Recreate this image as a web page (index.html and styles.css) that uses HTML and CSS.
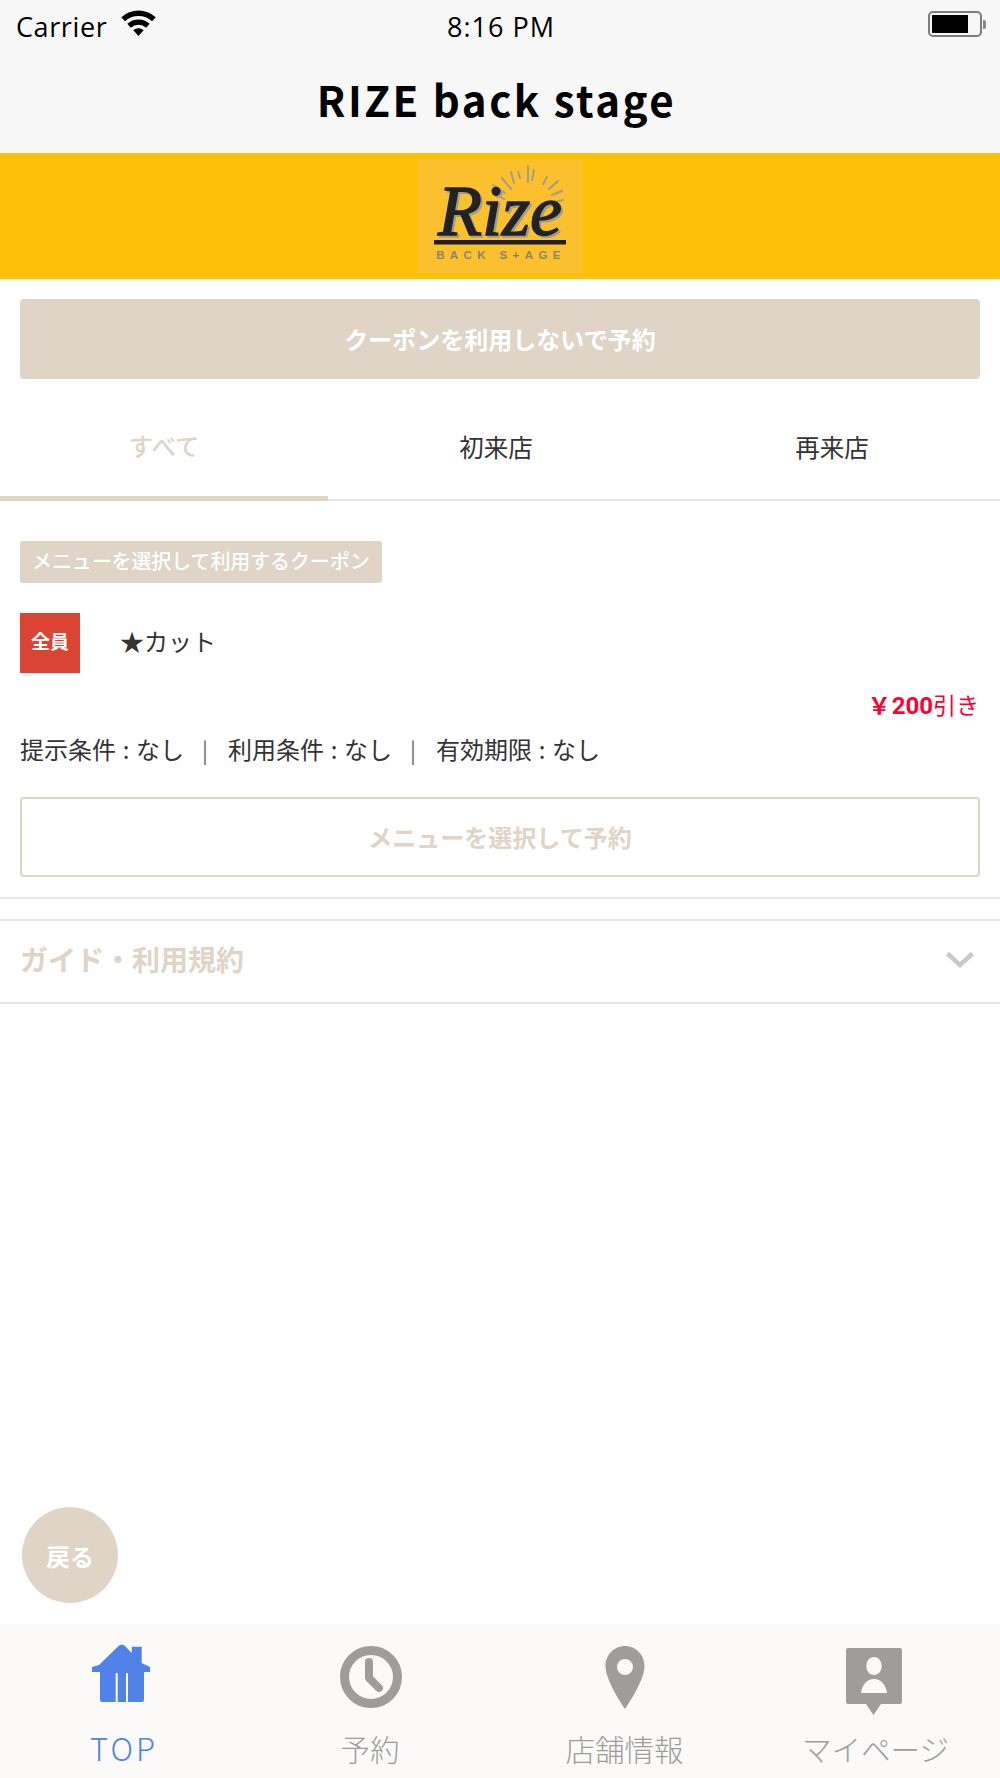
FILE: index.html
```html
<!DOCTYPE html>
<html lang="ja">

<head>
  <meta charset="UTF-8">
  <title>RIZE back stage</title>
  <link rel="stylesheet" href="styles.css">
</head>

<body>
  <div class="app">
    <header class="top">
      <div class="status">
        <div class="status-left">
          <span>Carrier</span>
          <svg class="wifi" viewBox="2 0 34 26">
            <path d="M19 25 14 19.500a7.500 7.500 0 0 1 10 0z" />
            <path d="M11.600 17 8.200 13.300a16 16 0 0 1 21.600 0L26.400 17a11 11 0 0 0-14.800 0z" />
            <path d="M5.900 10.800 2.400 7a24.500 24.500 0 0 1 33.200 0l-3.500 3.800a19.400 19.400 0 0 0-26.200 0z" />
          </svg>
        </div>
        <div class="status-time">8:16 PM</div>
        <div class="status-right">
          <div class="battery"><div class="battery-level"></div></div>
          <div class="battery-tip"></div>
        </div>
      </div>
      <h1 class="title">RIZE back stage</h1>
    </header>

    <div class="banner">
      <svg class="logo" viewBox="0 0 165 114">
        <rect width="165" height="114" fill="#fbc02d" />
        <g stroke="#a39c88" stroke-width="2" stroke-linecap="round">
          <path d="M110 7V23" />
          <path d="M116 11 114 21" />
          <path d="M100 13 102 19" />
          <path d="M93 13 96 24" />
          <path d="M84 19 93 30" />
          <path d="M75 26 87 34" />
          <path d="M78 35 86 40" />
          <path d="M75 45H81" />
          <path d="M129 18 125 25" />
          <path d="M140 22 131 30" />
          <path d="M144 32 134 36" />
          <path d="M145 41 136 43" />
        </g>
        <text class="logo-word" x="82" y="76" text-anchor="middle">Rize</text>
        <rect x="16" y="81" width="132" height="4.500" fill="#1f1f1f" />
        <text class="logo-sub" x="83" y="100" text-anchor="middle">BACK S+AGE</text>
      </svg>
    </div>

    <main class="content">
      <div class="plain-wrap">
        <a class="btn btn-solid">クーポンを利用しないで予約</a>
      </div>

      <nav class="tabs">
        <a class="tab tab-active">すべて</a>
        <a class="tab">初来店</a>
        <a class="tab">再来店</a>
      </nav>

      <section class="coupon">
        <div class="chip-row"><span class="chip">メニューを選択して利用するクーポン</span></div>
        <div class="coupon-head">
          <span class="badge">全員</span>
          <span class="coupon-name">★カット</span>
        </div>
        <div class="price"><span class="yen">￥</span><b>200</b>引き</div>
        <div class="terms">
          <span>提示条件 : なし</span><i>|</i>
          <span>利用条件 : なし</span><i>|</i>
          <span>有効期限 : なし</span>
        </div>
        <a class="btn btn-outline">メニューを選択して予約</a>
      </section>

      <div class="guide">
        <span class="guide-label">ガイド・利用規約</span>
        <svg class="chevron" viewBox="0 0 30 20">
          <path d="M2.500 3.500 15 15 27.500 3.500" />
        </svg>
      </div>

      <div class="back-wrap">
        <a class="back">戻る</a>
      </div>
    </main>

    <footer class="tabbar">
      <a class="tabbar-item tabbar-active">
        <svg class="tabbar-icon" viewBox="0 0 72 78">
          <path d="M7 27 14 25 33.500 6Q36.700 3 40 6L46.700 13V6.700H56.700V23L65 27V32H59V60Q59 62 57 62H17Q15 62 15 60V32H7z" />
          <path class="door" d="M31.700 33V62M42 33V62" />
        </svg>
        <span>TOP</span>
      </a>
      <a class="tabbar-item">
        <svg class="tabbar-icon" viewBox="0 0 72 78">
          <circle cx="37" cy="37" r="26.500" class="clock-face" />
          <path class="clock-hand" d="M35 22V38L45 48" />
        </svg>
        <span>予約</span>
      </a>
      <a class="tabbar-item">
        <svg class="tabbar-icon" viewBox="0 0 72 78">
          <path fill-rule="evenodd" d="M36 6C25 6 16.500 15 16.500 26 16.500 38 28 57 36 69 44 57 55.500 38 55.500 26 55.500 15 47 6 36 6zM36 19a8 8 0 1 1 0 16 8 8 0 0 1 0-16z" />
        </svg>
        <span>店舗情報</span>
      </a>
      <a class="tabbar-item">
        <svg class="tabbar-icon" viewBox="0 0 72 78">
          <path fill-rule="evenodd" d="M8 8H60Q62 8 62 10V62Q62 64 60 64H41L33.500 75 26 64H8Q6 64 6 62V10Q6 8 8 8zM34 17C29.500 17 26.300 21 26.300 26 26.300 31 29.500 35 34 35 38.500 35 41.700 31 41.700 26 41.700 21 38.500 17 34 17zM34 39C27 39 22 45 21 53H47C46 45 41 39 34 39z" />
        </svg>
        <span>マイページ</span>
      </a>
    </footer>
  </div>
</body>

</html>
```

FILE: styles.css
```css
html,
body {
  margin: 0;
  padding: 0;
  background: #fff;
}

a {
  display: block;
  text-decoration: none;
}

.app {
  width: 1000px;
  height: 1778px;
  display: flex;
  flex-direction: column;
  overflow: hidden;
  font-family: "Noto Sans CJK JP", "Noto Sans", sans-serif;
  color: #333;
}

/* status bar + nav */
.top {
  height: 153px;
  background: #f7f7f7;
  color: #000;
}

.status {
  height: 52px;
  padding: 0 14px 0 16px;
  display: flex;
  align-items: center;
  justify-content: space-between;
  font-family: "Open Sans", "Noto Sans", sans-serif;
  font-size: 27px;
  letter-spacing: 0.6px;
}

.status-left {
  width: 300px;
  display: flex;
  align-items: center;
  gap: 13px;
}

.wifi {
  width: 37px;
  height: 27px;
  margin-top: -5px;
}

.status-time {
  letter-spacing: 1px;
}

.status-right {
  width: 300px;
  display: flex;
  align-items: center;
  justify-content: flex-end;
  margin-top: -4px;
}

.battery {
  width: 54px;
  height: 26px;
  box-sizing: border-box;
  border: 2px solid #7d7d7d;
  border-radius: 5px;
  padding: 2px;
}

.battery-level {
  width: 36px;
  height: 18px;
  background: #000;
}

.battery-tip {
  width: 3px;
  height: 9px;
  margin-left: 1px;
  background: #8a8a8a;
  border-radius: 0 2px 2px 0;
}

.title {
  margin: 0;
  padding: 23px 7px 0 0;
  font-size: 42px;
  line-height: 48px;
  font-weight: 700;
  letter-spacing: 2.500px;
  text-align: center;
}

.banner {
  height: 126px;
  background: #ffc107;
  display: flex;
  justify-content: center;
  padding-top: 6px;
  box-sizing: border-box;
}

.logo {
  width: 165px;
  height: 114px;
}

.logo-word {
  font-family: "Liberation Serif", serif;
  font-style: italic;
  font-size: 72px;
  fill: #222;
  stroke: #222;
  stroke-width: 1.500px;
  filter: drop-shadow(2px 2px 0 #a39c88);
}

.logo-sub {
  font-family: "Liberation Sans", sans-serif;
  font-weight: 700;
  font-size: 11.500px;
  letter-spacing: 5.400px;
  fill: #8a8474;
}

/* main */
.content {
  flex: 1;
  display: flex;
  flex-direction: column;
}

.plain-wrap {
  padding: 20px 20px 0;
}

.btn {
  height: 80px;
  box-sizing: border-box;
  border-radius: 4px;
  padding-bottom: 2px;
  font-size: 24px;
  font-weight: 700;
  display: flex;
  align-items: center;
  justify-content: center;
}

.btn-solid {
  background: #e0d4c6;
  color: #fff;
}

.btn-outline {
  border: 2px solid #e0d4c6;
  background: #fff;
  color: #e0d4c6;
}

.tabs {
  display: flex;
  height: 122px;
  box-sizing: border-box;
  border-bottom: 2px solid #e6e6e6;
}

.tab {
  flex: 1;
  padding-top: 14px;
  display: flex;
  align-items: center;
  justify-content: center;
  font-size: 24.500px;
  font-weight: 400;
  color: #333;
}

.tab:first-child {
  flex: 0 0 328px;
}

.tab-active {
  margin-bottom: -2px;
  padding-top: 11px;
  box-shadow: inset 0 -5px 0 #e0d4c6;
  color: #e0d4c6;
  font-weight: 500;
}

.coupon {
  padding: 40px 20px 20px;
  border-bottom: 2px solid #e6e6e6;
}

.chip-row {
  display: flex;
}

.chip {
  width: 362px;
  height: 42px;
  box-sizing: border-box;
  padding-left: 12px;
  border-radius: 3px;
  background: #e0d4c6;
  color: #fff;
  font-size: 19.900px;
  font-weight: 500;
  line-height: 40px;
}

.coupon-head {
  margin-top: 30px;
  display: flex;
  align-items: center;
  gap: 40px;
}

.badge {
  width: 60px;
  height: 60px;
  background: #db4333;
  color: #fff;
  font-size: 19px;
  font-weight: 700;
  line-height: 56px;
  text-align: center;
}

.coupon-name {
  font-size: 24px;
  line-height: 34px;
  margin-top: -4px;
}

.price {
  margin-top: 14px;
  padding-right: 1px;
  height: 34px;
  line-height: 34px;
  text-align: right;
  color: #ff0033;
  font-size: 23px;
}

.price b {
  font-family: "Roboto", sans-serif;
  font-size: 24px;
}

.yen {
  font-weight: 700;
  margin-right: 1px;
}

.terms {
  margin-top: 11px;
  display: flex;
  align-items: center;
  height: 34px;
  font-size: 24px;
  line-height: 34px;
  word-spacing: 1.300px;
}

.terms i {
  font-style: normal;
  font-size: 22px;
  color: #666;
  margin: 0 20px 0 18px;
}

.coupon .btn-outline {
  margin-top: 31px;
}

.guide {
  margin-top: 20px;
  height: 85px;
  box-sizing: border-box;
  padding: 0 25px 0 20px;
  border-top: 2px solid #e6e6e6;
  border-bottom: 2px solid #e6e6e6;
  display: flex;
  align-items: center;
  justify-content: space-between;
  color: #e0d4c6;
  font-size: 28px;
  font-weight: 700;
}

.guide-label {
  margin-top: -6px;
}

.chevron {
  width: 30px;
  height: 20px;
  margin-top: -4px;
  fill: none;
  stroke: #c9c9cc;
  stroke-width: 4.500px;
}

.back-wrap {
  flex: 1;
  padding: 0 0 21px 22px;
  display: flex;
  align-items: flex-end;
}

.back {
  width: 96px;
  height: 96px;
  border-radius: 50%;
  background: #e0d4c6;
  color: #fff;
  font-size: 24px;
  font-weight: 700;
  display: flex;
  align-items: center;
  justify-content: center;
}

/* bottom tabs */
.tabbar {
  height: 154px;
  background: #fbfaf8;
  display: grid;
  grid-template-columns: 242px 256px 253px 249px;
}

.tabbar-item {
  display: flex;
  flex-direction: column;
  align-items: center;
  color: #9e9d9b;
  font-size: 29.500px;
  font-weight: 300;
  line-height: 36px;
}

.tabbar-item span {
  margin-top: 12px;
}

.tabbar-icon {
  width: 72px;
  height: 78px;
  margin-top: 16px;
  fill: #9e9d9b;
}

.tabbar-active {
  color: #5082ea;
}

.tabbar-active span {
  margin-left: 6px;
  letter-spacing: 3px;
  font-size: 31px;
}

.tabbar-active .tabbar-icon {
  fill: #5082ea;
}

.door {
  fill: none;
  stroke: #fbfaf8;
  stroke-width: 2;
}

.clock-face {
  fill: none;
  stroke: #9e9d9b;
  stroke-width: 9;
}

.clock-hand {
  fill: none;
  stroke: #9e9d9b;
  stroke-width: 8;
  stroke-linecap: round;
  stroke-linejoin: round;
}
```
